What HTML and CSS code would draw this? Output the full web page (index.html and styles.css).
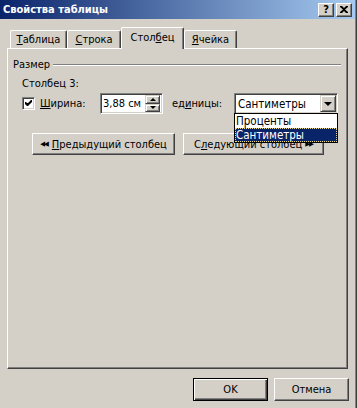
FILE: index.html
```html
<!DOCTYPE html>
<html lang="ru">
<head>
    <meta charset="UTF-8">
    <title>Свойства таблицы</title>
    <link rel="stylesheet" href="styles.css">
</head>
<body>
    <div class="window">
        <div class="titlebar">
            <span class="title">Свойства таблицы</span>
            <div class="caption-btns">
                <span class="cbtn help">?</span>
                <span class="cbtn close">
                    <svg width="8" height="7" viewBox="0 0 8 7"><path d="M0 0h2l2 2 2-2h2v1L5 3.5 8 6v1H6L4 5 2 7H0V6l3-2.5L0 1z" fill="#000"/></svg>
                </span>
            </div>
        </div>

        <div class="client">
            <div class="tabs">
                <div class="tab tab-1"><u>Т</u>аблица</div>
                <div class="tab tab-2"><u>С</u>трока</div>
                <div class="tab tab-3 active">Стол<u>б</u>ец</div>
                <div class="tab tab-4"><u>Я</u>чейка</div>
            </div>

            <div class="panel">
                <div class="group-head">
                    <span class="group-title">Размер</span>
                    <span class="groove"></span>
                </div>

                <div class="col-label">Столбец 3:</div>

                <div class="width-row">
                    <span class="check">
                        <svg width="7" height="7" viewBox="0 0 7 7"><path d="M0 2h1l1 1h1l3-3h1v2L3 6H2L0 4z" fill="#000"/></svg>
                    </span>
                    <span class="lbl width-lbl"><u>Ш</u>ирина:</span>
                    <div class="spin">
                        <span class="spin-text">3,88 см</span>
                        <div class="spin-btns">
                            <span class="sbtn"><i class="tri-up"></i></span>
                            <span class="sbtn"><i class="tri-down"></i></span>
                        </div>
                    </div>
                    <span class="lbl units-lbl">ед<u>и</u>ницы:</span>
                    <div class="combo-wrap">
                        <div class="combo">
                            <span class="combo-text">Сантиметры</span>
                            <span class="combo-btn"><i class="tri-big"></i></span>
                        </div>
                        <div class="droplist">
                            <div class="item">Проценты</div>
                            <div class="item selected"><span>Сантиметры</span></div>
                        </div>
                    </div>
                </div>

                <div class="nav-row">
                    <div class="btn prev-btn"><span class="arrows">&#9664;&#9664;</span><u>П</u>редыдущий столбец</div>
                    <div class="btn next-btn">С<u>л</u>едующий столбец<span class="arrows">&#9654;&#9654;</span></div>
                </div>
            </div>

            <div class="footer">
                <div class="btn ok-btn">OK</div>
                <div class="btn cancel-btn">Отмена</div>
            </div>
        </div>
    </div>
</body>
</html>
```

FILE: styles.css
```css
body {
    margin: 0;
    padding: 0;
    font-family: 'DejaVu Sans Condensed', 'Liberation Sans', Arial, sans-serif;
    font-size: 11px;
    color: #000;
    background-color: #d4d0c8;
}

.window {
    width: 355px;
    height: 408px;
    background-color: #d4d0c8;
    border-right: 1px solid #404040;
    box-shadow: inset -1px 0 #808080;
    padding-right: 1px;
}

u {
    text-decoration: underline;
    text-underline-offset: 1px;
}

/* заголовок окна */
.titlebar {
    height: 19px;
    width: 355px;
    display: flex;
    align-items: center;
    justify-content: space-between;
    background: linear-gradient(to right, #0a246a, #a6caf0);
}

.title {
    color: #fff;
    font-weight: bold;
    font-size: 11px;
    padding-left: 3px;
}

.caption-btns {
    display: flex;
    gap: 2px;
    padding-right: 3px;
}

.cbtn {
    width: 14px;
    height: 12px;
    display: flex;
    align-items: center;
    justify-content: center;
    background-color: #d4d0c8;
    border: 1px solid;
    border-color: #fff #404040 #404040 #fff;
    box-shadow: inset -1px -1px #808080;
    font-weight: bold;
    font-size: 11px;
    line-height: 12px;
}

/* клиентская область */
.client {
    padding-top: 8px;
}

.tabs {
    display: flex;
    align-items: flex-end;
    padding-left: 10px;
    height: 22px;
    margin-bottom: -1px;
}

.tab {
    height: 16px;
    margin-bottom: 1px;
    display: flex;
    align-items: center;
    justify-content: center;
    border-top: 1px solid #fff;
    border-left: 1px solid #fff;
    border-right: 1px solid #404040;
    box-shadow: inset -1px 0 #808080;
    border-radius: 2px 2px 0 0;
    padding-bottom: 1px;
}

.tab-1 { width: 55px; }
.tab-2 { width: 52px; }
.tab-3 { width: 61px; }
.tab-4 { width: 51px; }

.tab.active {
    height: 20px;
    margin-bottom: 0;
    padding-bottom: 1px;
    align-items: flex-start;
    line-height: 20px;
    position: relative;
    z-index: 1;
    background-color: #d4d0c8;
}

.panel {
    margin-left: 7px;
    width: 339px;
    height: 319px;
    border-top: 1px solid #fff;
    border-left: 1px solid #fff;
    border-right: 1px solid #404040;
    border-bottom: 1px solid #404040;
    box-shadow: inset -1px -1px #808080;
}

/* заголовок группы с линией */
.group-head {
    display: flex;
    align-items: center;
    margin: 9px 6px 0 5px;
    height: 13px;
}

.group-title {
    padding-right: 3px;
}

.groove {
    display: block;
    flex-grow: 1;
    height: 0;
    border-top: 1px solid #808080;
    border-bottom: 1px solid #fff;
}

.col-label {
    margin-top: 6px;
    padding-left: 14px;
    height: 13px;
}

.width-row {
    display: flex;
    align-items: center;
    margin-top: 3px;
    height: 21px;
}

.check {
    width: 9px;
    height: 9px;
    margin-left: 14px;
    display: flex;
    align-items: center;
    justify-content: center;
    background-color: #fff;
    border: 1px solid;
    border-color: #808080 #fff #fff #808080;
    box-shadow: inset 1px 1px #404040, inset -1px -1px #d4d0c8;
    padding: 1px;
}

.lbl {
    white-space: nowrap;
}

.width-lbl {
    margin-left: 5px;
    width: 60px;
}

.spin {
    width: 59px;
    height: 17px;
    display: flex;
    align-items: center;
    justify-content: space-between;
    background-color: #fff;
    border: 1px solid;
    border-color: #808080 #fff #fff #808080;
    box-shadow: inset 1px 1px #404040, inset -1px -1px #d4d0c8;
    padding: 1px;
}

.spin-text {
    padding-left: 1px;
}

.spin-btns {
    display: flex;
    flex-direction: column;
    width: 15px;
    height: 17px;
    margin-right: 1px;
}

.sbtn {
    flex: 1;
    display: flex;
    align-items: center;
    justify-content: center;
    background-color: #d4d0c8;
    border: 1px solid;
    border-color: #d4d0c8 #404040 #404040 #d4d0c8;
    box-shadow: inset 1px 1px #fff, inset -1px -1px #808080;
}

.tri-up {
    border-left: 3px solid transparent;
    border-right: 3px solid transparent;
    border-bottom: 3px solid #000;
}

.tri-down {
    border-left: 3px solid transparent;
    border-right: 3px solid transparent;
    border-top: 3px solid #000;
}

.units-lbl {
    margin-left: 9px;
    width: 62px;
}

.combo-wrap {
    position: relative;
}

.combo {
    width: 100px;
    height: 17px;
    display: flex;
    align-items: center;
    justify-content: space-between;
    background-color: #fff;
    border: 1px solid;
    border-color: #808080 #fff #fff #808080;
    box-shadow: inset 1px 1px #404040, inset -1px -1px #d4d0c8;
    padding: 1px;
}

.combo-text {
    padding-left: 2px;
    font-size: 11.5px;
}

.combo-btn {
    width: 14px;
    height: 15px;
    display: flex;
    align-items: center;
    justify-content: center;
    background-color: #d4d0c8;
    border: 1px solid;
    border-color: #d4d0c8 #404040 #404040 #d4d0c8;
    box-shadow: inset 1px 1px #fff, inset -1px -1px #808080;
}

.tri-big {
    border-left: 4px solid transparent;
    border-right: 4px solid transparent;
    border-top: 4px solid #000;
}

.droplist {
    position: absolute;
    left: 0;
    top: 20px;
    width: 102px;
    background-color: #fff;
    border: 1px solid #000;
    z-index: 2;
}

.item {
    height: 14px;
    line-height: 14px;
    padding-left: 1px;
    font-size: 11.5px;
}

.item.selected {
    background-color: #0a246a;
    color: #fff;
    outline: 1px dotted #e8d88c;
    outline-offset: -1px;
}

/* кнопки */
.btn {
    display: flex;
    align-items: center;
    justify-content: center;
    background-color: #d4d0c8;
    border: 1px solid;
    border-color: #fff #404040 #404040 #fff;
    box-shadow: inset -1px -1px #808080;
    box-sizing: border-box;
    white-space: nowrap;
}

.nav-row {
    display: flex;
    gap: 8px;
    margin-top: 19px;
    padding-left: 24px;
}

.prev-btn {
    width: 143px;
    height: 22px;
}

.next-btn {
    width: 141px;
    height: 22px;
}

.arrows {
    font-size: 7px;
    letter-spacing: -1px;
    margin-right: 4px;
}

.next-btn .arrows {
    margin-right: 0;
    margin-left: 3px;
}

.footer {
    display: flex;
    justify-content: flex-end;
    gap: 6px;
    margin-top: 9px;
    padding-right: 6px;
}

.ok-btn,
.cancel-btn {
    width: 75px;
    height: 23px;
}

.ok-btn {
    border: 1px solid #000;
    box-shadow: inset 1px 1px #fff, inset -1px -1px #404040, inset -2px -2px #808080;
}
```
